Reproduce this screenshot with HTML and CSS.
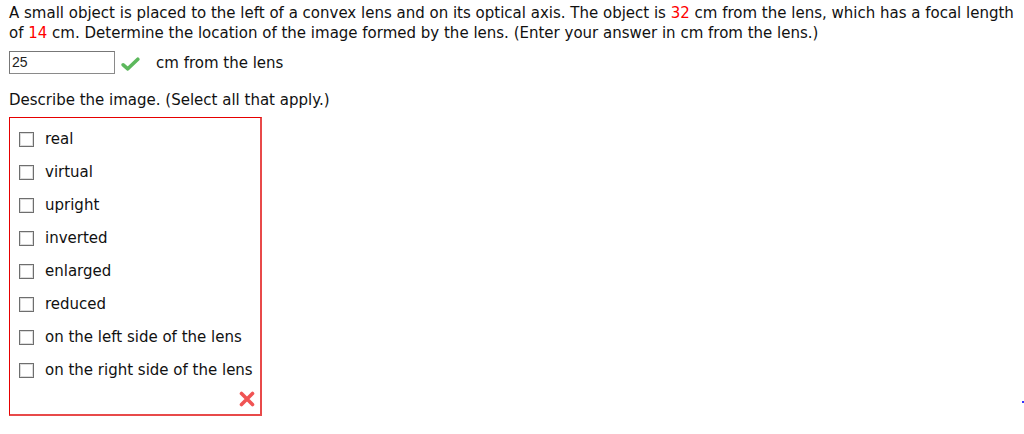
FILE: index.html
```html
<!DOCTYPE html>
<html>
<head>
<meta charset="utf-8">
<link rel="stylesheet" href="styles.css">
</head>
<body>
<div class="q">
  <p class="stem">A small object is placed to the left of a convex lens and on its optical axis. The object is <span class="red">32</span> cm from the lens, which has a focal length of <span class="red">14</span> cm. Determine the location of the image formed by the lens. (Enter your answer in cm from the lens.)</p>
  <div class="answer">
    <div class="input">25</div>
    <svg class="check" width="19" height="14" viewBox="0 0 19 14"><path d="M2.2 7.8 L6.8 11.8 L16.8 2.2" fill="none" stroke="#5cb85c" stroke-width="3.6" stroke-linecap="round" stroke-linejoin="round"/></svg>
    <span class="unit">cm from the lens</span>
  </div>
  <p class="describe">Describe the image. (Select all that apply.)</p>
  <div class="box">
    <ul class="opts">
      <li><span class="cb"></span>real</li>
      <li><span class="cb"></span>virtual</li>
      <li><span class="cb"></span>upright</li>
      <li><span class="cb"></span>inverted</li>
      <li><span class="cb"></span>enlarged</li>
      <li><span class="cb"></span>reduced</li>
      <li><span class="cb"></span>on the left side of the lens</li>
      <li><span class="cb"></span>on the right side of the lens</li>
    </ul>
    <div class="mark">
      <svg width="16" height="16" viewBox="0 0 16 16"><path d="M2.5 2.5 L13.5 13.5 M13.5 2.5 L2.5 13.5" stroke="#f05454" stroke-width="3.6" stroke-linecap="round"/></svg>
    </div>
  </div>
</div>
<span class="dot"></span>
</body>
</html>
```
FILE: styles.css
```css
html, body {
  margin: 0;
  padding: 0;
  background: #fff;
}
body {
  padding: 3px 4px 0 9px;
  font-family: "DejaVu Sans", Verdana, sans-serif;
  font-size: 15px;
  color: #111;
}
.q {
  display: flex;
  flex-direction: column;
}
.stem {
  margin: 0;
  line-height: 20px;
}
.red { color: #f00; }
.answer {
  display: flex;
  align-items: center;
  margin-top: 8px;
  height: 23px;
}
.input {
  box-sizing: border-box;
  width: 106px;
  height: 23px;
  border: 1px solid #8a8a8a;
  border-top-color: #777;
  border-left-color: #777;
  font-family: "Liberation Sans", Arial, sans-serif;
  font-size: 14px;
  line-height: 20px;
  padding-left: 2px;
  color: #222;
}
.check {
  margin-left: 6px;
  margin-top: 3px;
}
.unit {
  margin-left: 16px;
}
.describe {
  margin: 16px 0 0;
  line-height: 20px;
}
.box {
  box-sizing: border-box;
  margin-top: 7px;
  width: 253px;
  height: 299px;
  border: 1px solid #e60000;
  border-bottom: 2px solid #e84a4a;
  border-right: 2px solid #e84a4a;
  padding: 11px 5px 0 9px;
  display: flex;
  flex-direction: column;
}
.opts {
  list-style: none;
  margin: 0;
  padding: 0;
  display: flex;
  flex-direction: column;
  gap: 13px;
}
.opts li {
  display: flex;
  align-items: center;
  height: 20px;
  line-height: 20px;
}
.cb {
  box-sizing: border-box;
  width: 15px;
  height: 15px;
  border: 1px solid #6e6e6e;
  box-shadow: inset 0 0 0 1px #dcdcdc;
  margin-right: 11px;
  flex: none;
}
.mark {
  display: flex;
  justify-content: flex-end;
  margin-top: 11px;
}
.dot {
  position: absolute;
  left: 1022px;
  top: 401px;
  width: 2px;
  height: 2px;
  background: #33f;
}
```
